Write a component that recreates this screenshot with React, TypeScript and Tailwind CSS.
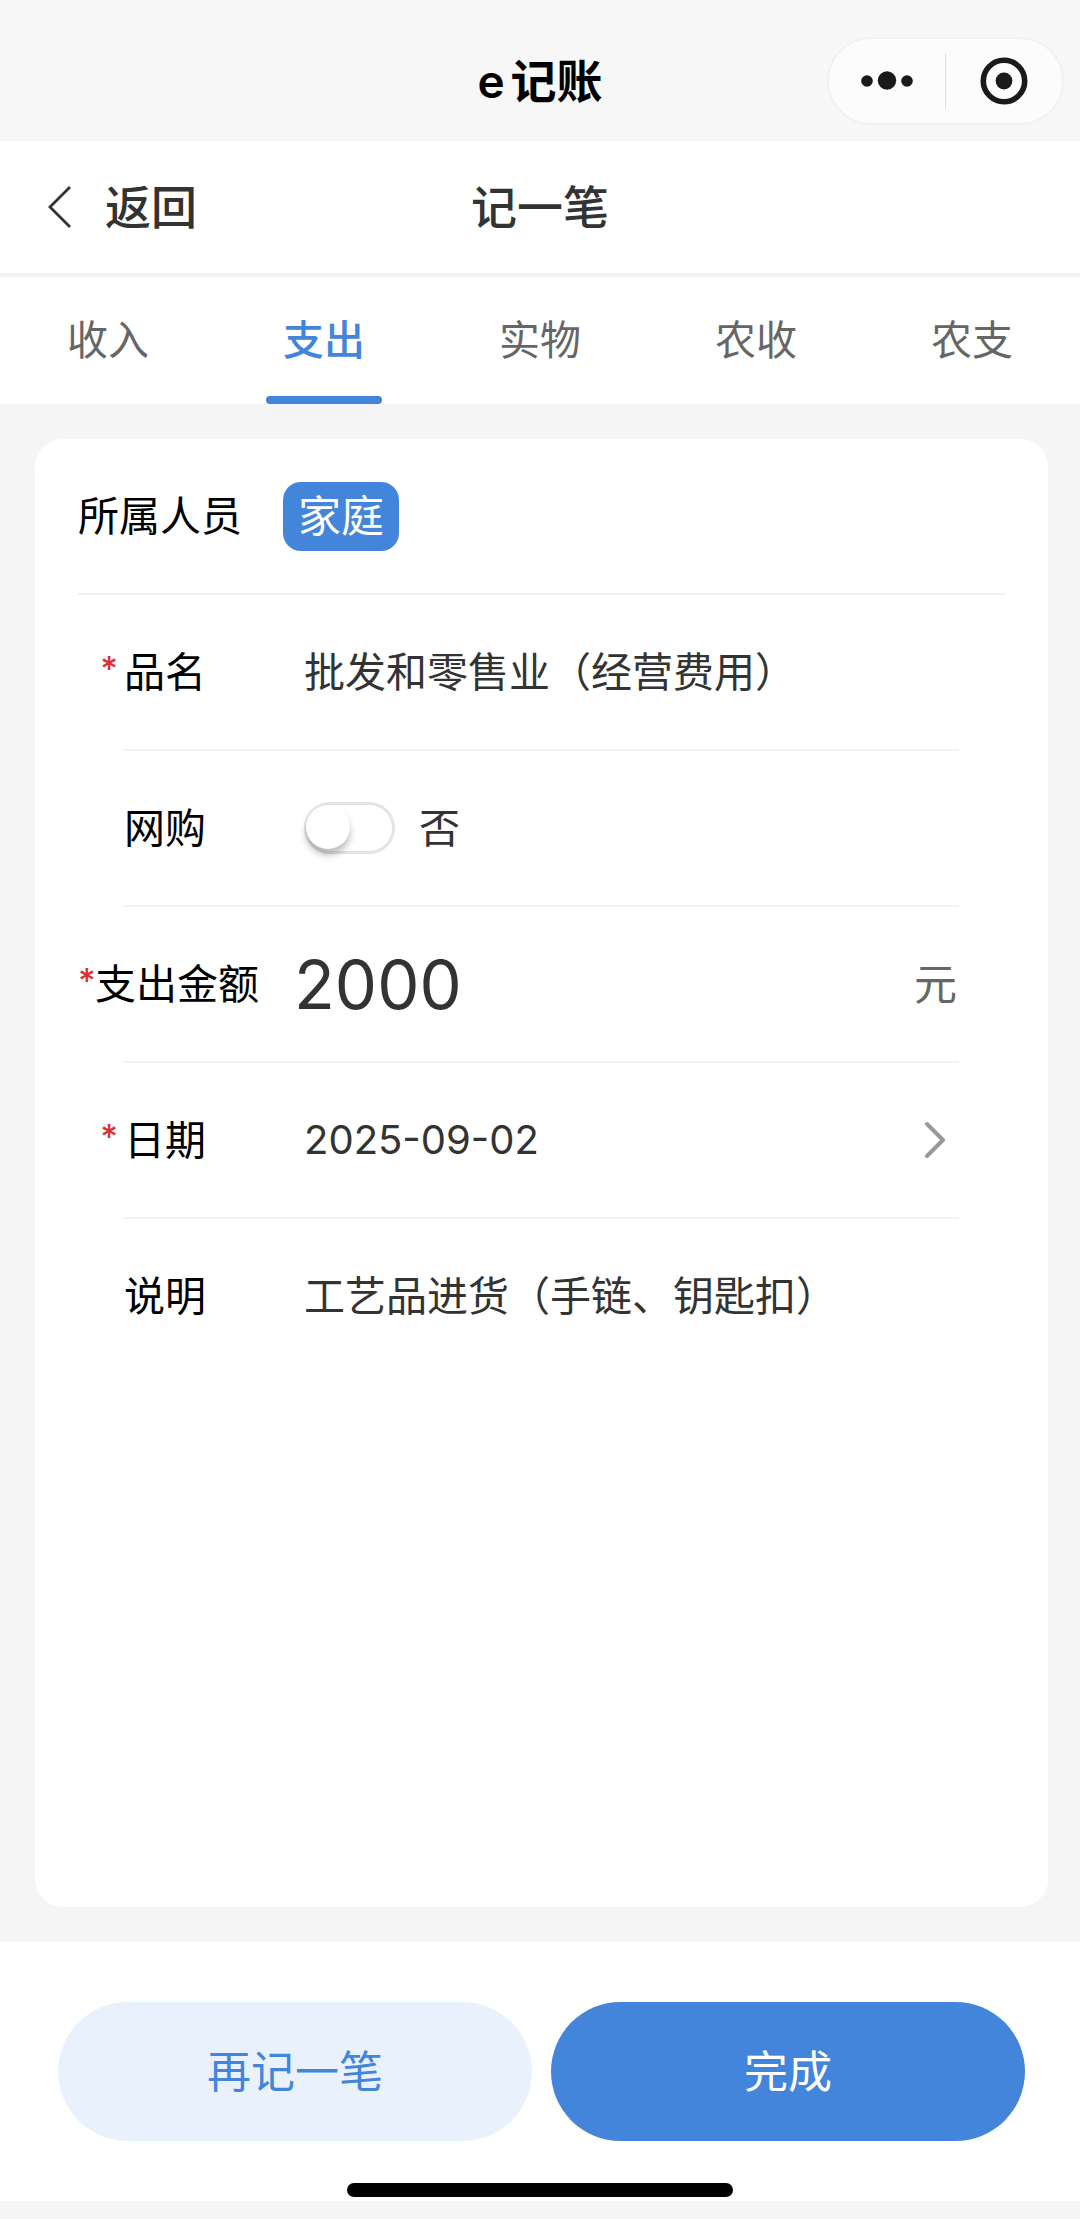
import { useState, type ReactNode } from 'react';

const TABS = ['收入', '支出', '实物', '农收', '农支'];

function Capsule() {
  return (
    <div className="flex h-[88px] w-[237px] items-center rounded-full border-2 border-[#f1f1f1] bg-[#fcfcfc]">
      <button type="button" aria-label="更多" className="flex h-full flex-1 items-center justify-center">
        <svg width="52" height="20" viewBox="0 0 52 20" fill="#1a1a1a" aria-hidden="true">
          <circle cx="6" cy="10" r="5.8" />
          <circle cx="26" cy="9.5" r="9.2" />
          <circle cx="46" cy="10" r="5.8" />
        </svg>
      </button>
      <span className="h-14 w-px bg-[#dedede]" />
      <button type="button" aria-label="关闭" className="flex h-full flex-1 items-center justify-center">
        <svg width="48" height="48" viewBox="0 0 48 48" aria-hidden="true">
          <circle cx="24" cy="24" r="20.7" fill="none" stroke="#1a1a1a" strokeWidth="5.6" />
          <circle cx="24" cy="24" r="8.4" fill="#1a1a1a" />
        </svg>
      </button>
    </div>
  );
}

type RowProps = {
  id: string;
  label: string;
  required?: boolean;
  wide?: boolean;
  last?: boolean;
  children: ReactNode;
};

function Row({ id, label, required, wide, last, children }: RowProps) {
  return (
    <div>
      <div className="flex h-[154px] items-center pr-12">
        <label htmlFor={id} className={wide ? 'flex w-[216px] shrink-0 text-black' : 'flex w-[226px] shrink-0 text-black'}>
          <span
            className={
              wide
                ? 'w-[17px] shrink-0 text-[34px] leading-[54px] font-medium text-[#dd2f33]'
                : 'w-[46px] shrink-0 pr-1.5 text-right text-[34px] leading-[54px] font-medium text-[#dd2f33]'
            }
          >
            {required ? '*' : ''}
          </span>
          <span className="whitespace-nowrap">{label}</span>
        </label>
        {children}
      </div>
      {!last && <div className="mx-[46px] h-0.5 bg-[#f3f3f4]" />}
    </div>
  );
}

export default function App() {
  const [tab, setTab] = useState('支出');
  const [name, setName] = useState('批发和零售业（经营费用）');
  const [online, setOnline] = useState(false);
  const [amount, setAmount] = useState('2000');
  const [note, setNote] = useState('工艺品进货（手链、钥匙扣）');

  return (
    <div className="flex min-h-screen flex-col bg-[#f5f5f5] font-['Inter','Noto_Sans_CJK_SC',sans-serif] text-[41px] leading-[60px] text-[#333]">
      <header className="grid h-[141px] grid-cols-[1fr_auto_1fr] items-center bg-[#f7f7f7] px-4 pt-[21px]">
        <span />
        <h1 className="text-[46px] font-semibold text-black">
          <span className="mr-1.5">e</span>记账
        </h1>
        <div className="flex justify-end">
          <Capsule />
        </div>
      </header>

      <nav className="grid h-[132px] grid-cols-[1fr_auto_1fr] items-center bg-white px-12 text-[46px] font-medium">
        <button type="button" className="flex items-center gap-[34px] justify-self-start">
          <svg width="23" height="42" viewBox="0 0 23 42" fill="none" stroke="#333" strokeWidth="2.8" aria-hidden="true">
            <path d="M22 1 2 21l20 20" />
          </svg>
          <span>返回</span>
        </button>
        <h2>记一笔</h2>
        <span />
      </nav>
      <div className="h-1 bg-[#f2f2f2]" />

      <div role="tablist" className="grid h-[127px] grid-cols-5 bg-white">
        {TABS.map((t) => (
          <button
            key={t}
            type="button"
            role="tab"
            aria-selected={t === tab}
            onClick={() => setTab(t)}
            className={
              t === tab
                ? 'flex flex-col items-center font-medium text-[#4285db]'
                : 'flex flex-col items-center text-[#666]'
            }
          >
            <span className="flex flex-1 items-center pt-1.5">{t}</span>
            <span className={t === tab ? 'h-2 w-[116px] rounded-full bg-[#4285db]' : 'h-2 w-[116px]'} />
          </button>
        ))}
      </div>

      <main className="flex flex-1 flex-col py-[35px] pr-8 pl-[35px]">
        <form className="flex-1 rounded-[28px] bg-white px-[43px]" onSubmit={(e) => e.preventDefault()}>
          <div className="flex h-[156px] items-center gap-[41px] border-b-2 border-[#f1f1f1]">
            <span className="text-black">所属人员</span>
            <button type="button" className="h-[69px] rounded-[18px] bg-[#4285db] px-[15px] text-[43px] text-white">
              家庭
            </button>
          </div>

          <Row id="name" label="品名" required>
            <input
              id="name"
              value={name}
              onChange={(e) => setName(e.target.value)}
              className="min-w-0 flex-1 outline-none"
            />
          </Row>

          <Row id="online" label="网购">
            <span className="relative flex h-[52px] w-[91px] shrink-0">
              <input
                id="online"
                type="checkbox"
                role="switch"
                checked={online}
                onChange={(e) => setOnline(e.target.checked)}
                className="peer h-full w-full appearance-none rounded-full border-3 border-[#e4e4e4] bg-white checked:border-[#4285db] checked:bg-[#4285db]"
              />
              <span className="pointer-events-none absolute top-[3px] left-0.5 size-[44px] rounded-full bg-white shadow-[0_6px_7px_rgba(0,0,0,0.26)] peer-checked:left-[45px]" />
            </span>
            <span className="ml-6">{online ? '是' : '否'}</span>
          </Row>

          <Row id="amount" label="支出金额" required wide>
            <input
              id="amount"
              inputMode="decimal"
              value={amount}
              onChange={(e) => setAmount(e.target.value)}
              className="h-24 min-w-0 flex-1 text-[67px] outline-none"
            />
            <span className="text-[43px] text-[#666]">元</span>
          </Row>

          <Row id="date" label="日期" required>
            <button id="date" type="button" className="flex flex-1 items-center justify-between pr-3">
              <span className="text-[40px]">2025-09-02</span>
              <svg
                width="22"
                height="38"
                viewBox="0 0 22 38"
                fill="none"
                stroke="#999"
                strokeWidth="4"
                strokeLinecap="round"
                strokeLinejoin="round"
                aria-hidden="true"
              >
                <path d="m4 3 16 16L4 35" />
              </svg>
            </button>
          </Row>

          <Row id="note" label="说明" last>
            <input
              id="note"
              value={note}
              onChange={(e) => setNote(e.target.value)}
              className="min-w-0 flex-1 outline-none"
            />
          </Row>
        </form>
      </main>

      <footer className="bg-white pt-[60px] pb-1">
        <div className="flex gap-[19px] pr-[55px] pl-[58px] text-[44px]">
          <button type="button" className="h-[139px] flex-1 rounded-full bg-[#e9f2fc] text-[#4285db]">
            再记一笔
          </button>
          <button type="button" className="h-[139px] flex-1 rounded-full bg-[#4285db] text-white">
            完成
          </button>
        </div>
        <div className="mx-auto mt-[42px] h-3.5 w-[386px] rounded-full bg-black" />
      </footer>
      <div className="h-[18px] bg-[#f5f5f5]" />
    </div>
  );
}
